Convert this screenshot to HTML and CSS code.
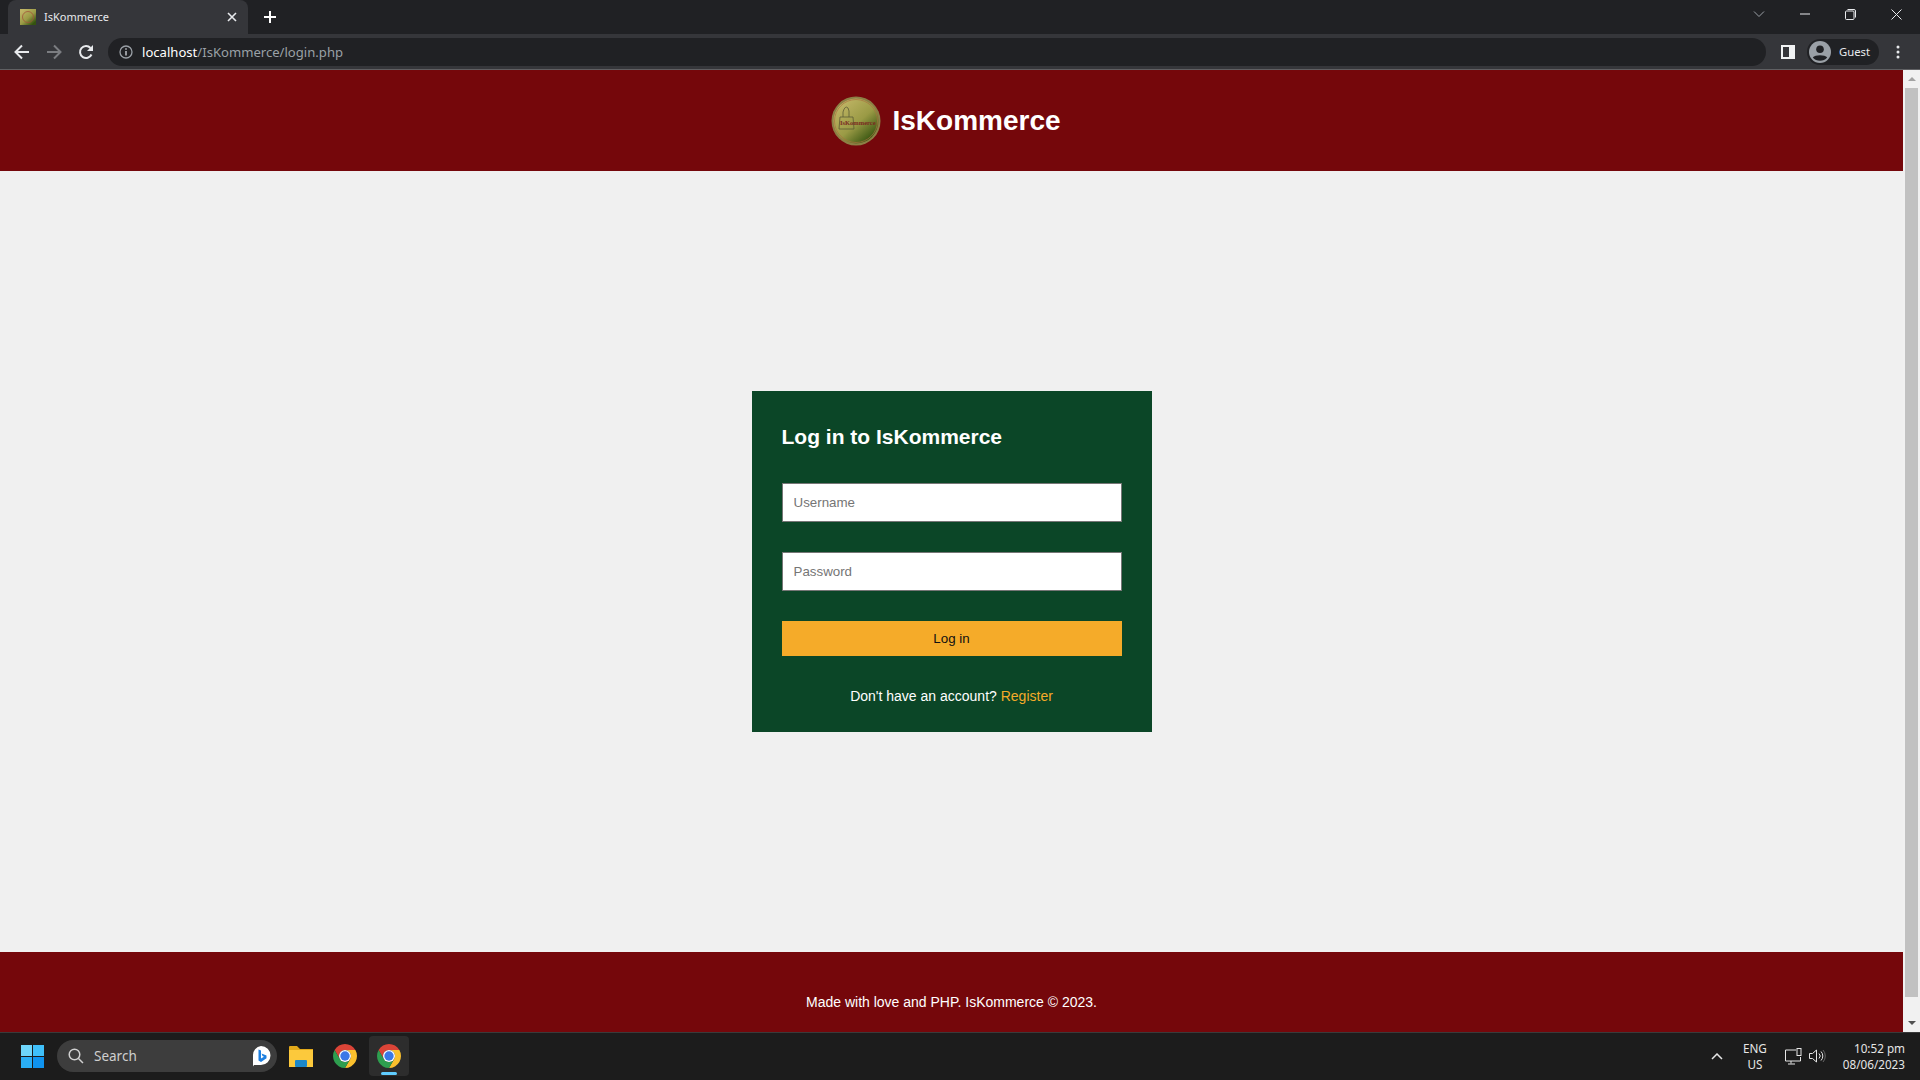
FILE: index.html
```html
<!DOCTYPE html>
<html lang="en">
<head>
    <meta charset="UTF-8">
    <meta name="viewport" content="width=device-width, initial-scale=1.0">
    <title>IsKommerce</title>
    <link rel="stylesheet" href="styles.css">
</head>
<body>
    <svg class="defs" width="0" height="0">
        <defs>
            <linearGradient id="coin" x1="0.15" y1="0.1" x2="0.85" y2="0.9">
                <stop offset="0" stop-color="#c0b565"/>
                <stop offset="0.55" stop-color="#9a9a45"/>
                <stop offset="1" stop-color="#34530f"/>
            </linearGradient>
            <symbol id="chrome" viewBox="0 0 24 24">
                <path fill="#db4437" d="M1.61 6A12 12 0 0 1 22.39 6H12A6 6 0 0 0 6.8 15Z"/>
                <path fill="#fbc02d" d="M22.39 6A12 12 0 0 1 12 24L17.2 15A6 6 0 0 0 12 6Z"/>
                <path fill="#2e9e4f" d="M12 24A12 12 0 0 1 1.61 6L6.8 15A6 6 0 0 0 17.2 15Z"/>
                <circle cx="12" cy="12" r="6" fill="#fff"/>
                <circle cx="12" cy="12" r="4.7" fill="#3b78e7"/>
            </symbol>
        </defs>
    </svg>

    <div class="browser">
        <div class="tabstrip">
            <div class="tab">
                <svg class="favicon" width="16" height="16" viewBox="0 0 16 16"><rect width="16" height="16" fill="url(#coin)"/><circle cx="8" cy="8" r="5.5" fill="none" stroke="#a2553a" stroke-width="0.8"/></svg>
                <span class="tab-title">IsKommerce</span>
                <svg class="tab-close" width="10" height="10" viewBox="0 0 10 10"><path d="M1 1l8 8M9 1l-8 8" stroke="#e8eaed" stroke-width="1.6"/></svg>
            </div>
            <svg class="new-tab" width="14" height="14" viewBox="0 0 14 14"><path d="M7 1v12M1 7h12" stroke="#fff" stroke-width="2"/></svg>
            <div class="window-btns">
                <svg width="12" height="8" viewBox="0 0 12 8"><path d="M1 1.5l5 5 5-5" fill="none" stroke="#9aa0a6" stroke-width="1"/></svg>
                <svg width="10" height="2" viewBox="0 0 10 2"><path d="M0 1h10" stroke="#e8eaed" stroke-width="1"/></svg>
                <svg width="11" height="11" viewBox="0 0 11 11"><path d="M.5 3a1 1 0 0 1 1-1H8a1 1 0 0 1 1 1v6.5a1 1 0 0 1-1 1H1.500a1 1 0 0 1-1-1ZM2.500 .5H9a1.500 1.500 0 0 1 1.500 1.500v6.500" fill="none" stroke="#e8eaed" stroke-width="1"/></svg>
                <svg width="11" height="11" viewBox="0 0 11 11"><path d="M.5 .5l10 10M10.500 .5l-10 10" stroke="#e8eaed" stroke-width="1"/></svg>
            </div>
        </div>
        <div class="toolbar">
            <svg class="nav-btn" width="16" height="16" viewBox="0 0 16 16"><path d="M15 8H2M8 1.500L1.500 8 8 14.500" fill="none" stroke="#e8eaed" stroke-width="2"/></svg>
            <svg class="nav-btn" width="16" height="16" viewBox="0 0 16 16"><path d="M1 8h13M8 1.500L14.500 8 8 14.500" fill="none" stroke="#7b7d81" stroke-width="2"/></svg>
            <svg class="nav-btn" width="16" height="16" viewBox="0 0 16 16"><path d="M13.500 10.500A6 6 0 1 1 12.500 4" fill="none" stroke="#e8eaed" stroke-width="2"/><path d="M15 1v6H9z" fill="#e8eaed"/></svg>
            <div class="omnibox">
                <svg width="14" height="14" viewBox="0 0 14 14"><circle cx="7" cy="7" r="6" fill="none" stroke="#9aa0a6" stroke-width="1.300"/><path d="M7 6v4.500M7 3.200v1.500" stroke="#bdc1c6" stroke-width="1.500"/></svg>
                <span class="url"><span class="url-host">localhost</span>/IsKommerce/login.php</span>
            </div>
            <svg class="side-panel" width="14" height="14" viewBox="0 0 14 14"><path fill-rule="evenodd" d="M0 0h14v14H0zM2 2v10h6V2z" fill="#f1f3f4"/></svg>
            <div class="profile">
                <svg width="22" height="22" viewBox="0 0 22 22"><circle cx="11" cy="11" r="11" fill="#9aa0a6"/><circle cx="11" cy="8.300" r="3.800" fill="#202124"/><path d="M3.800 16.500C6 13.500 16 13.500 18.200 16.500A9.500 9.500 0 0 1 3.800 16.500Z" fill="#202124"/></svg>
                <span>Guest</span>
            </div>
            <svg class="menu-dots" width="4" height="14" viewBox="0 0 4 14"><circle cx="2" cy="2" r="1.500" fill="#e8eaed"/><circle cx="2" cy="7" r="1.500" fill="#e8eaed"/><circle cx="2" cy="12" r="1.500" fill="#e8eaed"/></svg>
        </div>
    </div>

    <div class="viewport">
        <div class="page">
            <header class="site-header">
                <svg class="logo" width="50" height="50" viewBox="0 0 50 50">
                    <circle cx="25" cy="25" r="24.500" fill="#8c7f45"/>
                    <circle cx="25" cy="25" r="22.500" fill="url(#coin)"/>
                    <circle cx="25" cy="25" r="21.500" fill="none" stroke="#a8703f" stroke-width="0.700"/>
                    <path d="M9 21h13l1 12H8z" fill="none" stroke="#5c5a35" stroke-width="0.800"/>
                    <path d="M12 21v-5q2-7 5-4l1 3v6" fill="none" stroke="#5c5a35" stroke-width="0.800"/>
                    <text x="9" y="28.500" class="logo-text">IsKommerce</text>
                </svg>
                <h1>IsKommerce</h1>
            </header>
            <main class="site-main">
                <form class="login-card" onsubmit="return false">
                    <h2>Log in to IsKommerce</h2>
                    <input type="text" placeholder="Username">
                    <input type="password" placeholder="Password">
                    <button type="submit">Log in</button>
                    <p>Don't have an account? <a href="#">Register</a></p>
                </form>
            </main>
            <footer class="site-footer">Made with love and PHP. IsKommerce © 2023.</footer>
        </div>
        <div class="scrollbar">
            <div class="arrow-up"></div>
            <div class="thumb"></div>
            <div class="arrow-down"></div>
        </div>
    </div>

    <div class="taskbar">
        <svg class="start" width="23" height="23" viewBox="0 0 23 23">
            <rect width="11" height="11" fill="#6fd6fb"/><rect x="12" width="11" height="11" fill="#3fc0fa"/>
            <rect y="12" width="11" height="11" fill="#2aaef5"/><rect x="12" y="12" width="11" height="11" fill="#0f93ef"/>
        </svg>
        <div class="search">
            <svg width="16" height="16" viewBox="0 0 16 16"><circle cx="6.500" cy="6.500" r="5.300" fill="none" stroke="#d0d0d0" stroke-width="1.500"/><path d="M10.500 10.500L15 15" stroke="#d0d0d0" stroke-width="1.500"/></svg>
            <span>Search</span>
            <svg class="bing" width="20" height="22" viewBox="0 0 20 22"><path d="M10 1a9.500 9.500 0 0 1 0 19H3l-1 1.500V10.500A9 9 0 0 1 10 1z" fill="#fff"/><path d="M7.500 4.500l2.500 1v8l3-1.800-1.500-.8-1-2.300 5 1.800v2.800L10 17l-2.500-1.500z" fill="#1c7fe0"/></svg>
        </div>
        <svg class="task-icon folder" width="24" height="22" viewBox="0 0 24 22">
            <path d="M0 2a1 1 0 0 1 1-1h7l3 3h13v4H0z" fill="#e2a91a"/>
            <rect y="5" width="24" height="17" fill="#fcc93c"/>
            <rect x="6" y="15" width="12" height="7" rx="1" fill="#1b87c9"/>
        </svg>
        <svg class="task-icon" width="24" height="24"><use href="#chrome"/></svg>
        <div class="task-active">
            <svg width="24" height="24"><use href="#chrome"/></svg>
            <div class="task-indicator"></div>
        </div>
        <div class="tray">
            <svg width="12" height="7" viewBox="0 0 12 7"><path d="M1 6l5-5 5 5" fill="none" stroke="#e6e6e6" stroke-width="1.500"/></svg>
            <div class="lang">ENG<br>US</div>
            <svg width="17" height="17" viewBox="0 0 17 17"><path d="M11 2H.5v11h15V9M6 13v2.500M3 16h7" fill="none" stroke="#e6e6e6" stroke-width="1"/><rect x="12" y=".5" width="4" height="7" fill="none" stroke="#e6e6e6"/></svg>
            <svg width="17" height="14" viewBox="0 0 17 14"><path d="M.5 4.500h3L7.500 1v12l-4-3.500h-3z" fill="none" stroke="#e6e6e6"/><path d="M10 4.500a3.500 3.500 0 0 1 0 5M12 2.500a6.500 6.500 0 0 1 0 9" fill="none" stroke="#e6e6e6"/><path d="M14 1a9 9 0 0 1 0 12" fill="none" stroke="#666"/></svg>
            <div class="clock">10:52 pm<br>08/06/2023</div>
        </div>
    </div>
</body>
</html>
```

FILE: styles.css
```css
html, body {
    margin: 0;
    height: 100%;
}
body {
    display: flex;
    flex-direction: column;
    height: 1080px;
    overflow: hidden;
    font-family: 'Liberation Sans', Arial, sans-serif;
    background: #f0f0f0;
}
.defs {
    position: absolute;
}
svg {
    display: block;
    flex-shrink: 0;
}

/* browser chrome */
.browser {
    height: 70px;
    flex-shrink: 0;
    font-family: 'Noto Sans', sans-serif;
}
.tabstrip {
    height: 34px;
    background: #202124;
    display: flex;
    align-items: center;
    padding-left: 8px;
}
.tab {
    width: 240px;
    height: 34px;
    box-sizing: border-box;
    background: #35363a;
    border-radius: 8px 8px 0 0;
    display: flex;
    align-items: center;
    padding: 0 11px 0 12px;
    color: #e8eaed;
    font-size: 11px;
}
.tab-title {
    margin: 0 0 2px 8px;
    flex: 1;
}
.new-tab {
    margin-left: 15px;
}
.window-btns {
    margin-left: auto;
    display: flex;
    align-items: center;
    gap: 35px;
    padding: 0 18px 6px 0;
}
.toolbar {
    height: 36px;
    box-sizing: border-box;
    background: #35363a;
    border-bottom: 1px solid #5f6063;
    display: flex;
    align-items: center;
    padding-left: 14px;
}
.nav-btn {
    margin-right: 16px;
}
.omnibox {
    width: 1658px;
    height: 28px;
    margin-left: -2px;
    background: #202124;
    border-radius: 14px;
    display: flex;
    align-items: center;
    padding-left: 11px;
    box-sizing: border-box;
    font-size: 13.100px;
    color: #9aa0a6;
}
.url {
    margin-left: 9px;
}
.url-host {
    color: #fff;
}
.side-panel {
    margin-left: 15px;
}
.profile {
    width: 72px;
    height: 26px;
    margin-left: 12px;
    background: #202124;
    border-radius: 13px;
    display: flex;
    align-items: center;
    gap: 8px;
    padding-left: 2px;
    box-sizing: border-box;
    color: #e8eaed;
    font-size: 11.300px;
}
.menu-dots {
    margin-left: 17px;
}

/* page */
.viewport {
    height: 962px;
    flex-shrink: 0;
    display: flex;
}
.page {
    flex: 1;
    display: flex;
    flex-direction: column;
}
.site-header {
    height: 101px;
    background: #75070b;
    display: flex;
    align-items: center;
    justify-content: center;
    gap: 11px;
}
.site-header h1 {
    margin: 0 11px 0 0;
    color: #fff;
    font-size: 28px;
}
.logo-text {
    font-family: 'Liberation Serif', serif;
    font-size: 6.500px;
    font-weight: bold;
    fill: #7a2a20;
}
.site-main {
    flex: 1;
    display: flex;
    align-items: center;
    justify-content: center;
}
.login-card {
    width: 400px;
    box-sizing: border-box;
    padding: 30px 30px 28px;
    background: #0b4627;
    color: #fff;
}
.login-card h2 {
    margin: 4px 0 34px;
    font-size: 21px;
    line-height: 24px;
}
.login-card input {
    display: block;
    width: 100%;
    height: 39px;
    box-sizing: border-box;
    margin: 0 0 30px;
    padding: 0 11px;
    border: 1px solid #767676;
    background: #fff;
    font-family: 'Liberation Sans', sans-serif;
    font-size: 13.33px;
}
.login-card input::placeholder {
    color: #757575;
}
.login-card button {
    display: block;
    width: 100%;
    height: 35px;
    border: none;
    background: #f5ab29;
    color: #111;
    font-family: 'Liberation Sans', sans-serif;
    font-size: 13.33px;
}
.login-card p {
    margin: 32px 0 0;
    font-size: 14px;
    line-height: 16px;
    text-align: center;
}
.login-card a {
    color: #f5ab29;
    text-decoration: none;
}
.site-footer {
    height: 80px;
    box-sizing: border-box;
    padding-top: 20px;
    background: #75070b;
    color: #fff;
    font-size: 14px;
    display: flex;
    align-items: center;
    justify-content: center;
}
.scrollbar {
    width: 17px;
    background: #f1f1f1;
    display: flex;
    flex-direction: column;
    align-items: center;
    padding: 7px 0;
    box-sizing: border-box;
}
.arrow-up, .arrow-down {
    width: 0;
    height: 0;
    border-left: 4px solid transparent;
    border-right: 4px solid transparent;
}
.arrow-up {
    border-bottom: 4px solid #a3a3a3;
}
.arrow-down {
    border-top: 4px solid #505050;
}
.thumb {
    flex: 1;
    width: 13px;
    margin: 7px 0 24px;
    background: #c1c1c1;
}

/* windows taskbar */
.taskbar {
    height: 48px;
    flex-shrink: 0;
    box-sizing: border-box;
    background: #1c1c1c;
    box-shadow: inset 0 1px 0 #3a3a3a;
    display: flex;
    align-items: center;
    padding-left: 21px;
    color: #e6e6e6;
    font-family: 'Noto Sans', sans-serif;
}
.search {
    width: 220px;
    height: 32px;
    box-sizing: border-box;
    margin-left: 13px;
    background: #3d3d3d;
    border-radius: 16px;
    display: flex;
    align-items: center;
    padding: 0 6px 0 11px;
    font-size: 13.5px;
    color: #cfcfcf;
}
.search span {
    margin-left: 10px;
    flex: 1;
}
.folder {
    margin-left: 12px;
}
.task-icon {
    margin-right: 20px;
}
.task-active {
    width: 40px;
    height: 40px;
    margin-left: -8px;
    background: #2d2d2d;
    border-radius: 4px;
    display: flex;
    flex-direction: column;
    align-items: center;
    justify-content: center;
    position: relative;
}
.task-indicator {
    position: absolute;
    left: 12px;
    bottom: 1px;
    width: 16px;
    height: 3px;
    border-radius: 2px;
    background: #60cdff;
}
.tray {
    margin-left: auto;
    display: flex;
    align-items: center;
    padding-right: 15px;
    font-size: 11.700px;
    line-height: 16px;
}
.lang {
    text-align: center;
    margin: 0 18px 0 20px;
}
.tray svg + svg {
    margin-left: 7px;
}
.clock {
    margin-left: 17px;
    text-align: right;
}
```
